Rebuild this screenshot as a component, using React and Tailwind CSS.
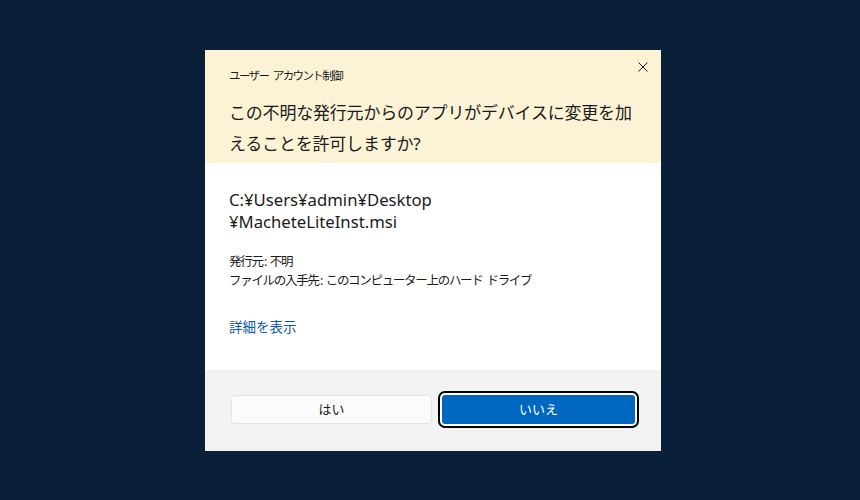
import React from "react";

const jp = {
  fontFamily: '"Noto Sans", "Noto Sans CJK JP", sans-serif',
};

// UAC dialog
const App = () => {
  return (
    <div
      className="w-full h-[500px] bg-[#0a1f38] flex items-start pl-[205px] pt-[50px]"
      style={jp}
    >
      <div className="w-[456px] h-[401px] flex flex-col">
        {/* Header */}
        <div className="relative h-[113px] bg-[#fcf3d6] pl-[24px] pt-[18px]">
          <div className="text-[11.5px] leading-[16px] text-[#1b1b1b] tracking-[-1.6px] [word-spacing:3px]">
            ユーザー アカウント制御
          </div>
          <div className="mt-[13px] text-[17px] leading-[31px] text-[#1b1b1b] tracking-[-0.2px] whitespace-nowrap">
            この不明な発行元からのアプリがデバイスに変更を加
            <br />
            えることを許可しますか?
          </div>
          <button
            className="absolute top-[12px] right-[13px] text-[#1b1b1b]"
            aria-label="閉じる"
          >
            <svg width="10" height="10" viewBox="0 0 10 10">
              <path
                d="M0.5 0.5 L9.5 9.5 M9.5 0.5 L0.5 9.5"
                stroke="currentColor"
                strokeWidth="1"
                fill="none"
              />
            </svg>
          </button>
        </div>

        {/* Body */}
        <div className="flex-1 bg-white pl-[24px] pt-[26px]">
          <div className="text-[16.7px] leading-[22px] text-[#1b1b1b]">
            C:¥Users¥admin¥Desktop
            <br />
            ¥MacheteLiteInst.msi
          </div>
          <div className="mt-[19px] text-[12.5px] leading-[19px] text-[#1b1b1b] tracking-[-1.3px] [word-spacing:2px]">
            <div>
              発行元<span className="ml-[1.5px] tracking-normal [word-spacing:-1px]">: </span>不明
            </div>
            <div>
              ファイルの入手先<span className="ml-[1.5px] tracking-normal [word-spacing:-1px]">: </span>このコンピューター上のハード ドライブ
            </div>
          </div>
          <div className="mt-[27px] text-[13.5px] leading-[20px] text-[#0a5aa8]">
            詳細を表示
          </div>
        </div>

        {/* Footer */}
        <div className="h-[81px] bg-[#f3f3f3] pl-[26px] pt-[25px] flex gap-[10px]">
          <button className="w-[201px] h-[29px] rounded-[4px] bg-[#fbfbfb] border border-[#e5e5e5] text-[13px] text-[#1b1b1b]">
            はい
          </button>
          <button className="w-[193px] h-[29px] rounded-[3px] bg-[#0067c0] text-[13px] text-white shadow-[0_0_0_2px_#ffffff,0_0_0_4px_#000000]">
            いいえ
          </button>
        </div>
      </div>
    </div>
  );
};

export default App;
